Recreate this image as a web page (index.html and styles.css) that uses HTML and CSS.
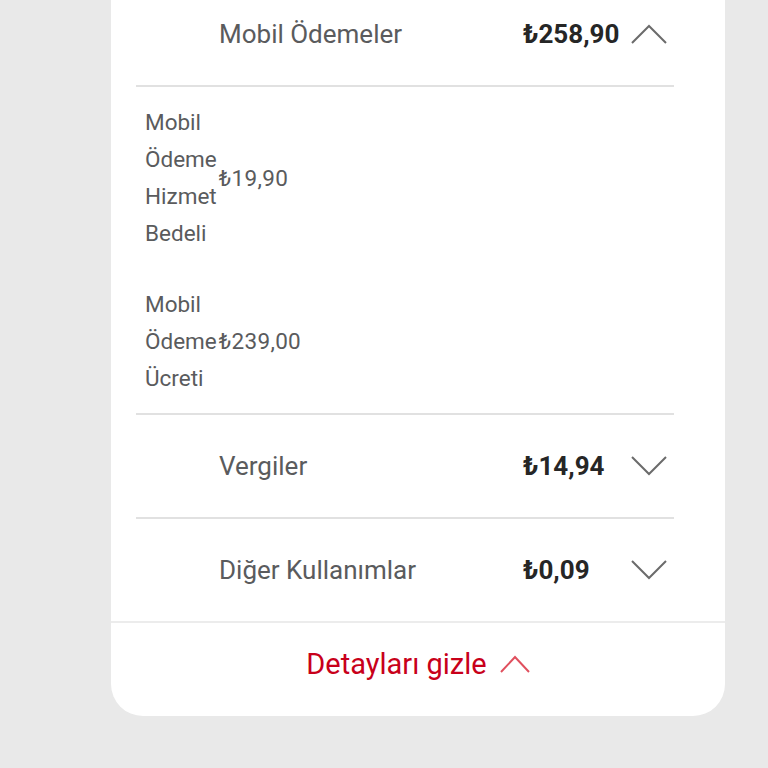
FILE: index.html
```html
<!DOCTYPE html>
<html lang="tr">
<head>
    <meta charset="UTF-8">
    <meta name="viewport" content="width=device-width, initial-scale=1.0">
    <title>Fatura Detayları</title>
    <link rel="stylesheet" href="styles.css">
</head>
<body>
    <section class="card">
        <div class="group">
            <!-- Mobil Ödemeler (open) -->
            <div class="row">
                <span class="row-label">Mobil Ödemeler</span>
                <span class="row-amount">₺258,90</span>
                <svg class="chev" viewBox="0 0 36 20"><path d="M1 19 L18 2 L35 19"/></svg>
            </div>
            <div class="items">
                <div class="item">
                    <div class="item-label">Mobil Ödeme Hizmet Bedeli</div>
                    <div class="item-amount">₺19,90</div>
                </div>
                <div class="item">
                    <div class="item-label">Mobil Ödeme Ücreti</div>
                    <div class="item-amount">₺239,00</div>
                </div>
            </div>

            <div class="row">
                <span class="row-label">Vergiler</span>
                <span class="row-amount">₺14,94</span>
                <svg class="chev" viewBox="0 0 36 20"><path d="M1 1 L18 18 L35 1"/></svg>
            </div>

            <div class="row last">
                <span class="row-label">Diğer Kullanımlar</span>
                <span class="row-amount">₺0,09</span>
                <svg class="chev" viewBox="0 0 36 20"><path d="M1 1 L18 18 L35 1"/></svg>
            </div>
        </div>

        <button class="toggle" type="button">
            Detayları gizle
            <svg class="toggle-chev" viewBox="0 0 30 20"><path d="M1 18 L15 3 L29 18"/></svg>
        </button>
    </section>
</body>
</html>
```

FILE: styles.css
```css
body {
    margin: 0;
    background-color: #e9e9e9;
    font-family: Roboto, "Liberation Sans", sans-serif;
    color: #4a4d4e;
}
.card {
    background: #fff;
    width: 614px;
    margin: -28px 0 0 111px;
    border-radius: 0 0 32px 32px;
}
.group {
    padding: 11px 51px 0 25px;
}
.row {
    display: flex;
    align-items: center;
    height: 104px;
    padding: 0 7px 0 83px;
    border-bottom: 2px solid #e1e1e1;
    box-sizing: border-box;
}
.row.last {
    height: 102px;
    border-bottom: none;
}
.row-label {
    flex: 1;
    font-size: 26px;
    color: #5a5b5d;
}
.row-amount {
    width: 108px;
    font-size: 26px;
    font-weight: bold;
    color: #262626;
}
.chev {
    width: 36px;
    height: 20px;
    fill: none;
    stroke: #6b6b6b;
    stroke-width: 2;
}
.items {
    display: flex;
    flex-direction: column;
    gap: 34px;
    padding: 17px 9px 16px;
    border-bottom: 2px solid #e1e1e1;
}
.item {
    display: flex;
    align-items: center;
    font-size: 22.5px;
    line-height: 37px;
    color: #5a5b5d;
}
.item-label { width: min-content; }
.item-amount { margin-left: 2px; letter-spacing: 0.3px; }
.toggle {
    display: flex;
    align-items: center;
    justify-content: center;
    gap: 13px;
    width: 100%;
    height: 95px;
    border: none;
    border-top: 2px solid #ececec;
    background: none;
    font-family: Roboto, "Liberation Sans", sans-serif;
    font-size: 29px;
    color: #c8001a;
    padding: 0 0 11px;
    cursor: pointer;
}
.toggle-chev {
    width: 30px;
    height: 20px;
    fill: none;
    stroke: #e0505e;
    stroke-width: 2;
}
```
